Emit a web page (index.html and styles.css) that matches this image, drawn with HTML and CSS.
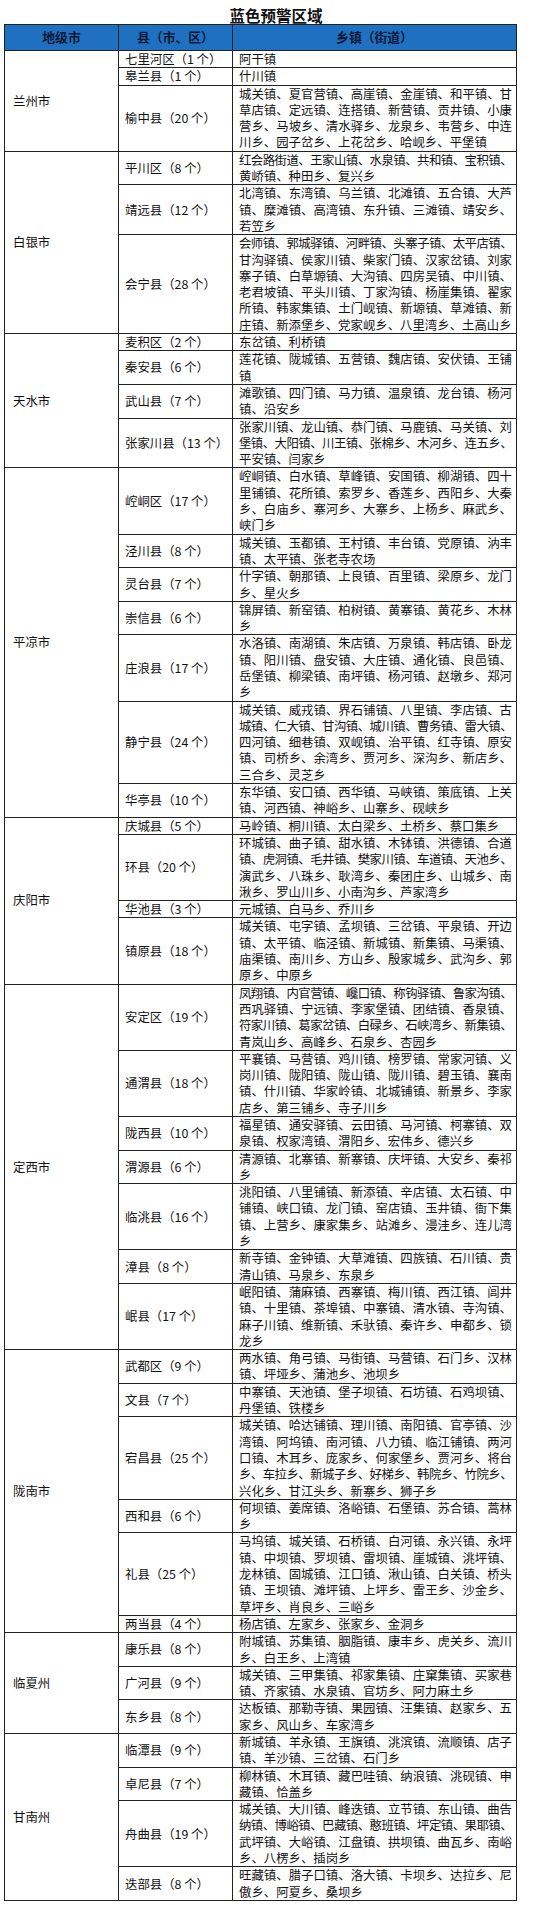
FILE: index.html
```html
<!DOCTYPE html>
<html lang="zh-CN">
<head>
<meta charset="utf-8">
<title>蓝色预警区域</title>
<link rel="stylesheet" href="styles.css">
</head>
<body>
<div class="title">蓝色预警区域</div>
<table class="tbl">
<colgroup><col class="c1"><col class="c2"><col class="c3"></colgroup>
<thead>
<tr><th>地级市</th><th>县（市、区）</th><th>乡镇（街道）</th></tr>
</thead>
<tbody>
<tr><td class="city" rowspan="3">兰州市</td><td class="cty">七里河区（1 个）</td><td class="t"><span>阿干镇</span></td></tr>
<tr><td class="cty">皋兰县（1 个）</td><td class="t"><span>什川镇</span></td></tr>
<tr><td class="cty">榆中县（20 个）</td><td class="t"><span>城关镇、夏官营镇、高崖镇、金崖镇、和平镇、甘</span><span>草店镇、定远镇、连搭镇、新营镇、贡井镇、小康</span><span>营乡、马坡乡、清水驿乡、龙泉乡、韦营乡、中连</span><span>川乡、园子岔乡、上花岔乡、哈岘乡、平堡镇</span></td></tr>

<tr><td class="city" rowspan="3">白银市</td><td class="cty">平川区（8 个）</td><td class="t"><span class="c">红会路街道、王家山镇、水泉镇、共和镇、宝积镇、</span><span>黄峤镇、种田乡、复兴乡</span></td></tr>
<tr><td class="cty">靖远县（12 个）</td><td class="t"><span>北湾镇、东湾镇、乌兰镇、北滩镇、五合镇、大芦</span><span>镇、糜滩镇、高湾镇、东升镇、三滩镇、靖安乡、</span><span>若笠乡</span></td></tr>
<tr><td class="cty">会宁县（28 个）</td><td class="t"><span class="c">会师镇、郭城驿镇、河畔镇、头寨子镇、太平店镇、</span><span>甘沟驿镇、侯家川镇、柴家门镇、汉家岔镇、刘家</span><span>寨子镇、白草塬镇、大沟镇、四房吴镇、中川镇、</span><span>老君坡镇、平头川镇、丁家沟镇、杨崖集镇、翟家</span><span>所镇、韩家集镇、土门岘镇、新塬镇、草滩镇、新</span><span>庄镇、新添堡乡、党家岘乡、八里湾乡、土高山乡</span></td></tr>

<tr><td class="city" rowspan="4">天水市</td><td class="cty">麦积区（2 个）</td><td class="t"><span>东岔镇、利桥镇</span></td></tr>
<tr><td class="cty">秦安县（6 个）</td><td class="t"><span>莲花镇、陇城镇、五营镇、魏店镇、安伏镇、王铺</span><span>镇</span></td></tr>
<tr><td class="cty">武山县（7 个）</td><td class="t"><span>滩歌镇、四门镇、马力镇、温泉镇、龙台镇、杨河</span><span>镇、沿安乡</span></td></tr>
<tr><td class="cty">张家川县（13 个）</td><td class="t"><span>张家川镇、龙山镇、恭门镇、马鹿镇、马关镇、刘</span><span class="c">堡镇、大阳镇、川王镇、张棉乡、木河乡、连五乡、</span><span>平安镇、闫家乡</span></td></tr>

<tr><td class="city" rowspan="7">平凉市</td><td class="cty">崆峒区（17 个）</td><td class="t"><span>崆峒镇、白水镇、草峰镇、安国镇、柳湖镇、四十</span><span>里铺镇、花所镇、索罗乡、香莲乡、西阳乡、大秦</span><span>乡、白庙乡、寨河乡、大寨乡、上杨乡、麻武乡、</span><span>峡门乡</span></td></tr>
<tr><td class="cty">泾川县（8 个）</td><td class="t"><span>城关镇、玉都镇、王村镇、丰台镇、党原镇、汭丰</span><span>镇、太平镇、张老寺农场</span></td></tr>
<tr><td class="cty">灵台县（7 个）</td><td class="t"><span>什字镇、朝那镇、上良镇、百里镇、梁原乡、龙门</span><span>乡、星火乡</span></td></tr>
<tr><td class="cty">崇信县（6 个）</td><td class="t"><span>锦屏镇、新窑镇、柏树镇、黄寨镇、黄花乡、木林</span><span>乡</span></td></tr>
<tr><td class="cty">庄浪县（17 个）</td><td class="t"><span>水洛镇、南湖镇、朱店镇、万泉镇、韩店镇、卧龙</span><span>镇、阳川镇、盘安镇、大庄镇、通化镇、良邑镇、</span><span>岳堡镇、柳梁镇、南坪镇、杨河镇、赵墩乡、郑河</span><span>乡</span></td></tr>
<tr><td class="cty">静宁县（24 个）</td><td class="t"><span>城关镇、威戎镇、界石铺镇、八里镇、李店镇、古</span><span class="c">城镇、仁大镇、甘沟镇、城川镇、曹务镇、雷大镇、</span><span>四河镇、细巷镇、双岘镇、治平镇、红寺镇、原安</span><span>镇、司桥乡、余湾乡、贾河乡、深沟乡、新店乡、</span><span>三合乡、灵芝乡</span></td></tr>
<tr><td class="cty">华亭县（10 个）</td><td class="t"><span>东华镇、安口镇、西华镇、马峡镇、策底镇、上关</span><span>镇、河西镇、神峪乡、山寨乡、砚峡乡</span></td></tr>

<tr><td class="city" rowspan="4">庆阳市</td><td class="cty">庆城县（5 个）</td><td class="t"><span>马岭镇、桐川镇、太白梁乡、土桥乡、蔡口集乡</span></td></tr>
<tr><td class="cty">环县（20 个）</td><td class="t"><span>环城镇、曲子镇、甜水镇、木钵镇、洪德镇、合道</span><span class="c">镇、虎洞镇、毛井镇、樊家川镇、车道镇、天池乡、</span><span>演武乡、八珠乡、耿湾乡、秦团庄乡、山城乡、南</span><span>湫乡、罗山川乡、小南沟乡、芦家湾乡</span></td></tr>
<tr><td class="cty">华池县（3 个）</td><td class="t"><span>元城镇、白马乡、乔川乡</span></td></tr>
<tr><td class="cty">镇原县（18 个）</td><td class="t"><span>城关镇、屯字镇、孟坝镇、三岔镇、平泉镇、开边</span><span>镇、太平镇、临泾镇、新城镇、新集镇、马渠镇、</span><span>庙渠镇、南川乡、方山乡、殷家城乡、武沟乡、郭</span><span>原乡、中原乡</span></td></tr>

<tr><td class="city" rowspan="7">定西市</td><td class="cty">安定区（19 个）</td><td class="t"><span class="c">凤翔镇、内官营镇、巉口镇、称钩驿镇、鲁家沟镇、</span><span>西巩驿镇、宁远镇、李家堡镇、团结镇、香泉镇、</span><span class="c">符家川镇、葛家岔镇、白碌乡、石峡湾乡、新集镇、</span><span>青岚山乡、高峰乡、石泉乡、杏园乡</span></td></tr>
<tr><td class="cty">通渭县（18 个）</td><td class="t"><span>平襄镇、马营镇、鸡川镇、榜罗镇、常家河镇、义</span><span>岗川镇、陇阳镇、陇山镇、陇川镇、碧玉镇、襄南</span><span>镇、什川镇、华家岭镇、北城铺镇、新景乡、李家</span><span>店乡、第三铺乡、寺子川乡</span></td></tr>
<tr><td class="cty">陇西县（10 个）</td><td class="t"><span>福星镇、通安驿镇、云田镇、马河镇、柯寨镇、双</span><span>泉镇、权家湾镇、渭阳乡、宏伟乡、德兴乡</span></td></tr>
<tr><td class="cty">渭源县（6 个）</td><td class="t"><span>清源镇、北寨镇、新寨镇、庆坪镇、大安乡、秦祁</span><span>乡</span></td></tr>
<tr><td class="cty">临洮县（16 个）</td><td class="t"><span>洮阳镇、八里铺镇、新添镇、辛店镇、太石镇、中</span><span>铺镇、峡口镇、龙门镇、窑店镇、玉井镇、衙下集</span><span>镇、上营乡、康家集乡、站滩乡、漫洼乡、连儿湾</span><span>乡</span></td></tr>
<tr><td class="cty">漳县（8 个）</td><td class="t"><span>新寺镇、金钟镇、大草滩镇、四族镇、石川镇、贵</span><span>清山镇、马泉乡、东泉乡</span></td></tr>
<tr><td class="cty">岷县（17 个）</td><td class="t"><span>岷阳镇、蒲麻镇、西寨镇、梅川镇、西江镇、闾井</span><span>镇、十里镇、茶埠镇、中寨镇、清水镇、寺沟镇、</span><span>麻子川镇、维新镇、禾驮镇、秦许乡、申都乡、锁</span><span>龙乡</span></td></tr>

<tr><td class="city" rowspan="6">陇南市</td><td class="cty">武都区（9 个）</td><td class="t"><span>两水镇、角弓镇、马街镇、马营镇、石门乡、汉林</span><span>镇、坪垭乡、蒲池乡、池坝乡</span></td></tr>
<tr><td class="cty">文县（7 个）</td><td class="t"><span>中寨镇、天池镇、堡子坝镇、石坊镇、石鸡坝镇、</span><span>丹堡镇、铁楼乡</span></td></tr>
<tr><td class="cty">宕昌县（25 个）</td><td class="t"><span>城关镇、哈达铺镇、理川镇、南阳镇、官亭镇、沙</span><span>湾镇、阿坞镇、南河镇、八力镇、临江铺镇、两河</span><span>口镇、木耳乡、庞家乡、何家堡乡、贾河乡、将台</span><span class="c">乡、车拉乡、新城子乡、好梯乡、韩院乡、竹院乡、</span><span>兴化乡、甘江头乡、新寨乡、狮子乡</span></td></tr>
<tr><td class="cty">西和县（6 个）</td><td class="t"><span>何坝镇、姜席镇、洛峪镇、石堡镇、苏合镇、蒿林</span><span>乡</span></td></tr>
<tr><td class="cty">礼县（25 个）</td><td class="t"><span>马坞镇、城关镇、石桥镇、白河镇、永兴镇、永坪</span><span>镇、中坝镇、罗坝镇、雷坝镇、崖城镇、洮坪镇、</span><span>龙林镇、固城镇、江口镇、湫山镇、白关镇、桥头</span><span>镇、王坝镇、滩坪镇、上坪乡、雷王乡、沙金乡、</span><span>草坪乡、肖良乡、三峪乡</span></td></tr>
<tr><td class="cty">两当县（4 个）</td><td class="t"><span>杨店镇、左家乡、张家乡、金洞乡</span></td></tr>

<tr><td class="city" rowspan="3">临夏州</td><td class="cty">康乐县（8 个）</td><td class="t"><span>附城镇、苏集镇、胭脂镇、康丰乡、虎关乡、流川</span><span>乡、白王乡、上湾镇</span></td></tr>
<tr><td class="cty">广河县（9 个）</td><td class="t"><span>城关镇、三甲集镇、祁家集镇、庄窠集镇、买家巷</span><span>镇、齐家镇、水泉镇、官坊乡、阿力麻土乡</span></td></tr>
<tr><td class="cty">东乡县（8 个）</td><td class="t"><span>达板镇、那勒寺镇、果园镇、汪集镇、赵家乡、五</span><span>家乡、风山乡、车家湾乡</span></td></tr>

<tr><td class="city" rowspan="4">甘南州</td><td class="cty">临潭县（9 个）</td><td class="t"><span>新城镇、羊永镇、王旗镇、洮滨镇、流顺镇、店子</span><span>镇、羊沙镇、三岔镇、石门乡</span></td></tr>
<tr><td class="cty">卓尼县（7 个）</td><td class="t"><span>柳林镇、木耳镇、藏巴哇镇、纳浪镇、洮砚镇、申</span><span>藏镇、恰盖乡</span></td></tr>
<tr><td class="cty">舟曲县（19 个）</td><td class="t"><span>城关镇、大川镇、峰迭镇、立节镇、东山镇、曲告</span><span class="c">纳镇、博峪镇、巴藏镇、憨班镇、坪定镇、果耶镇、</span><span>武坪镇、大峪镇、江盘镇、拱坝镇、曲瓦乡、南峪</span><span>乡、八楞乡、插岗乡</span></td></tr>
<tr><td class="cty">迭部县（8 个）</td><td class="t"><span>旺藏镇、腊子口镇、洛大镇、卡坝乡、达拉乡、尼</span><span>傲乡、阿夏乡、桑坝乡</span></td></tr>
</tbody>
</table>
</body>
</html>
```

FILE: styles.css
```css
html, body {
  margin: 0;
  padding: 0;
  background: #fff;
}
body {
  width: 536px;
  font-family: "Noto Sans CJK SC", "Noto Sans CJK JP", sans-serif;
  color: #111;
}
.title {
  margin-left: 4px;
  width: 512px;
  box-sizing: border-box;
  height: 24px;
  padding: 6px 0 0 32px;
  line-height: 18px;
  text-align: center;
  font-size: 15.5px;
  font-weight: bold;
  color: #111;
}
.tbl {
  margin-left: 4px;
  width: 512px;
  border-collapse: collapse;
  table-layout: fixed;
  font-size: 12.4px;
  line-height: 16.3px;
}
.c1 { width: 114px; }
.c2 { width: 114px; }
.c3 { width: 284px; }
.tbl th, .tbl td {
  border: 1px solid #222;
  padding: 0;
}
.tbl th {
  height: 25px;
  background: #1f70c1;
  color: #0e1a33;
  font-size: 12.8px;
  font-weight: bold;
  text-align: center;
  vertical-align: middle;
}
.city {
  padding-left: 8px !important;
  vertical-align: middle;
}
.cty {
  padding-left: 6px !important;
  vertical-align: middle;
  white-space: nowrap;
}
.t {
  padding: 0 4px 0 6px !important;
  vertical-align: middle;
}
.t span {
  display: block;
  white-space: nowrap;
}
.t span:not(:last-child) {
  text-align-last: justify;
  text-align: justify;
}
.t .c {
  letter-spacing: -0.6px;
}
```
